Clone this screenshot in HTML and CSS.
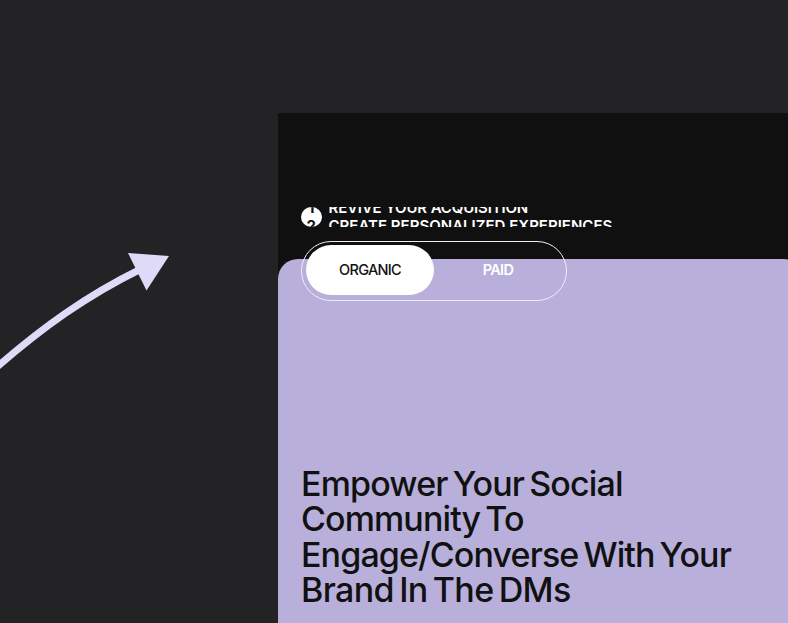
FILE: index.html
```html
<!DOCTYPE html>
<html lang="en">
<head>
<meta charset="utf-8">
<title>Social community</title>
<link rel="stylesheet" href="styles.css">
</head>
<body>
<div class="page">
  <aside class="side">
    <svg class="arrow" viewBox="0 0 180 140" width="180" height="140" aria-hidden="true">
      <path class="arrow-line" d="M-6 129.500C43 87 86 56 141 29"/>
      <path class="arrow-head" d="M128 13L169 16L146.500 50.500Z"/>
    </svg>
  </aside>
  <main class="panel">
    <div class="ticker">
      <div class="ticker-number"><span>1</span><span>2</span></div>
      <div class="ticker-text">
        <span class="ticker-a">REVIVE YOUR ACQUISITION</span>
        <span class="ticker-b">CREATE PERSONALIZED EXPERIENCES</span>
      </div>
    </div>
    <nav class="tabs">
      <button class="tab tab-active">ORGANIC</button>
      <button class="tab">PAID</button>
    </nav>
    <section class="card">
      <h1 class="title">
        <span class="line-1">Empower Your Social</span>
        <span class="line-2">Community To</span>
        <span class="line-3">Engage/Converse With Your</span>
        <span class="line-4">Brand In The DMs</span>
      </h1>
    </section>
  </main>
</div>
</body>
</html>
```

FILE: styles.css
```css
* { box-sizing: border-box; }
body {
  margin: 0;
  background: #232325;
  color: #111;
  font-family: Inter, "Liberation Sans", sans-serif;
  overflow: hidden;
}
.page {
  display: grid;
  grid-template-columns: 278px 526px;
  height: 623px;
  overflow: hidden;
}
.side { padding-top: 240px; }
.arrow { display: block; }
.arrow-line { fill: none; stroke: #dfdaf8; stroke-width: 7; }
.arrow-head { fill: #dfdaf8; }
.panel {
  display: flex;
  flex-direction: column;
  margin-top: 113px;
  padding-top: 94px;
  background: #101010;
}
.ticker {
  display: flex;
  flex: none;
  gap: 7px;
  height: 20px;
  margin-left: 23px;
  overflow: hidden;
}
.ticker-number {
  width: 20.5px;
  height: 20px;
  overflow: hidden;
  border-radius: 50%;
  background: #fff;
  color: #111;
  text-align: center;
}
.ticker-number span, .ticker-text span {
  display: block;
  height: 18px;
  margin-top: -8px;
  font-size: 15px;
  font-weight: 600;
  line-height: 18px;
  white-space: nowrap;
}
.ticker-number span { font-weight: 700; }
.ticker-number span + span, .ticker-text span + span { margin-top: 0; }
.ticker-text { color: #fff; }
.ticker-a { letter-spacing: -0.15px; }
.ticker-b { letter-spacing: 0.01px; }
.tabs {
  position: relative;
  z-index: 1;
  display: flex;
  flex: none;
  width: 266px;
  height: 60px;
  margin: 14px 0 0 23px;
  padding: 3.4px 4px;
  border: 1px solid #f0edfa;
  border-radius: 30px;
}
.tab {
  width: 128px;
  height: 50px;
  padding: 0 0 1px;
  border: 0;
  border-radius: 25px;
  background: none;
  color: #fff;
  font: 500 14.5px/48px Inter, "Liberation Sans", sans-serif;
  letter-spacing: -0.7px;
}
.tab:not(.tab-active) { font-weight: 600; }
.tab-active { background: #fff; color: #111; }
.card {
  flex: 1;
  margin-top: -42.5px;
  padding: 207.1px 23px 0;
  border-radius: 20px 20px 0 0;
  background: #b8afdb;
}
.title {
  margin: 0;
  font-size: 34px;
  font-weight: 500;
  line-height: 35.5px;
  letter-spacing: -0.88px;
  word-spacing: -3.2px;
  white-space: nowrap;
}
.title span { display: block; }
.title .line-1 { letter-spacing: -0.83px; }
.title .line-4 { letter-spacing: -0.64px; }
```
